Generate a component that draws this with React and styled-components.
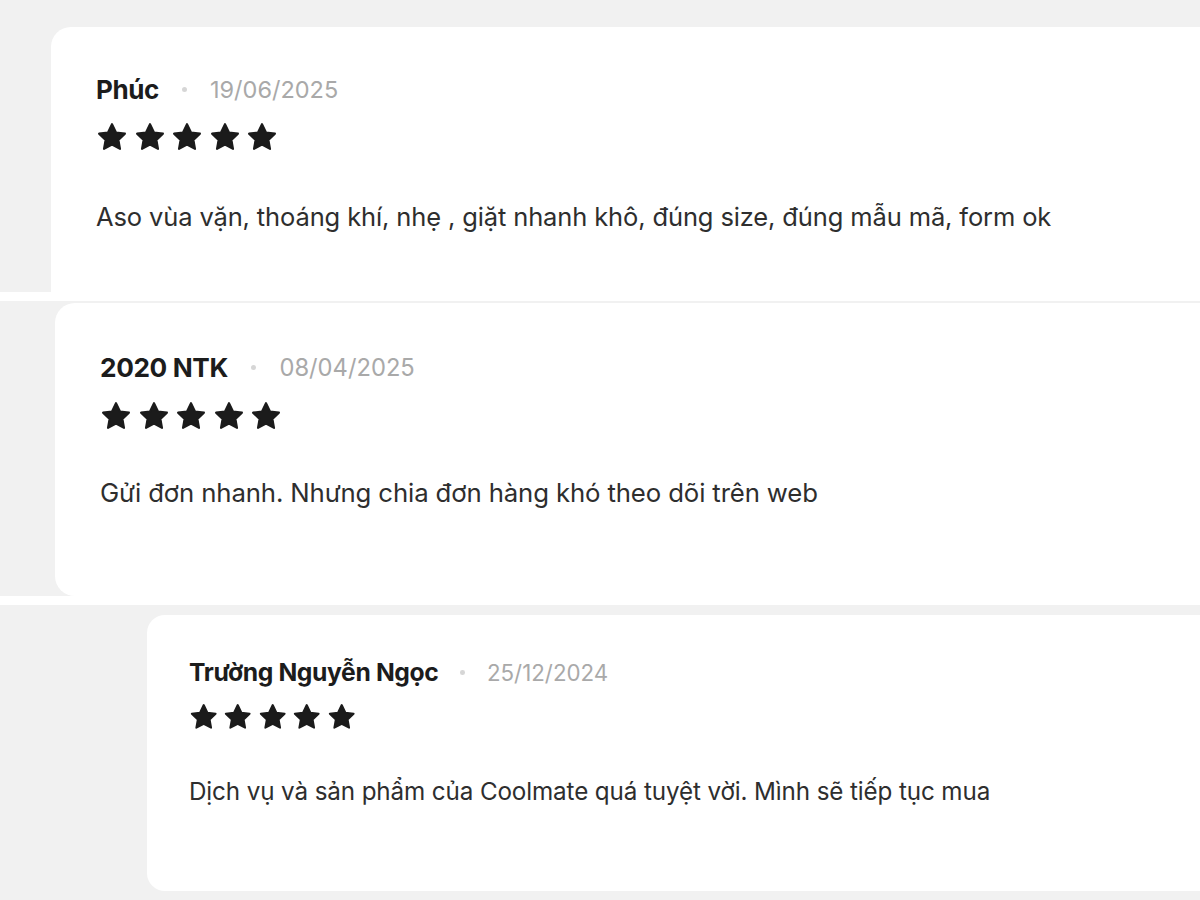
import styled, { createGlobalStyle } from 'styled-components'

const GlobalStyle = createGlobalStyle`
  html, body {
    margin: 0;
    padding: 0;
    background: #f1f1f1;
  }
  body {
    font-family: Inter, "Noto Sans", "Liberation Sans", sans-serif;
  }
`

const Page = styled.div`
  width: 1200px;
  height: 900px;
  overflow: hidden;
  display: flex;
  flex-direction: column;
  background: #f1f1f1;
`

const Section = styled.div`
  display: flex;
  padding: ${p => p.$pad};
  background: #f1f1f1;
`

const Strip = styled.div`
  height: ${p => p.$h}px;
  background: #fff;
`

const Card = styled.div`
  flex: 1;
  height: ${p => p.$h}px;
  background: #fff;
  border-radius: ${p => p.$radius};
  padding: ${p => p.$top}px 0 0 ${p => p.$left}px;
  box-sizing: border-box;
  display: flex;
  flex-direction: column;
`

const Head = styled.div`
  display: flex;
  align-items: center;
  gap: ${p => 23 * p.$s}px;
  height: ${p => 26 * p.$s}px;
`

const Name = styled.span`
  font-size: ${p => 26 * p.$s}px;
  font-weight: 700;
  color: #1c1c1c;
  letter-spacing: -0.015em;
`

const Dot = styled.span`
  width: ${p => 5 * p.$s}px;
  height: ${p => 5 * p.$s}px;
  border-radius: 50%;
  background: #d6d6d6;
`

const Date = styled.span`
  font-size: ${p => 23.5 * p.$s}px;
  color: #a9a9a9;
`

const Stars = styled.div`
  display: flex;
  gap: ${p => 5.5 * p.$s}px;
  margin-top: ${p => 20 * p.$s}px;
`

const Review = styled.p`
  margin: ${p => p.$gap}px 0 0;
  font-size: ${p => 25.5 * p.$s}px;
  color: #2e2e2e;
  letter-spacing: -0.005em;
`

function Star({ size }) {
  return (
    <svg width={size} height={size * 0.92} viewBox="0 0 24 22">
      <path
        d="M12 1.6l3 6.2 6.7.9-4.9 4.7 1.2 6.7L12 16.9l-6 3.2 1.2-6.7-4.9-4.7 6.7-.9z"
        fill="#1b1b1b"
        stroke="#1b1b1b"
        strokeWidth="1.6"
        strokeLinejoin="round"
      />
    </svg>
  )
}

function ReviewCard({ name, date, text, s, star, h, top, left, gap, radius }) {
  return (
    <Card $h={h} $top={top} $left={left} $radius={radius}>
      <Head $s={s}>
        <Name $s={s}>{name}</Name>
        <Dot $s={s} />
        <Date $s={s}>{date}</Date>
      </Head>
      <Stars $s={star}>
        {[0, 1, 2, 3, 4].map(i => <Star key={i} size={32 * star} />)}
      </Stars>
      <Review $s={s} $gap={gap}>{text}</Review>
    </Card>
  )
}

export default function App() {
  return (
    <Page>
      <GlobalStyle />
      <Section $pad="27px 0 0 51px">
        <ReviewCard
          name="Phúc"
          date="19/06/2025"
          text="Aso vùa vặn, thoáng khí, nhẹ , giặt nhanh khô, đúng size, đúng mẫu mã, form ok"
          s={1}
          star={1}
          h={265}
          top={49}
          left={45}
          gap={50}
          radius="20px 0 0 0"
        />
      </Section>
      <Strip $h={9} />
      <Section $pad="2px 0 0 55px">
        <ReviewCard
          name="2020 NTK"
          date="08/04/2025"
          text="Gửi đơn nhanh. Nhưng chia đơn hàng khó theo dõi trên web"
          s={1.01}
          star={1}
          h={293}
          top={52}
          left={45}
          gap={47}
          radius="20px 0 0 20px"
        />
      </Section>
      <Strip $h={10} />
      <Section $pad="10px 0 9px 147px">
        <ReviewCard
          name="Trường Nguyễn Ngọc"
          date="25/12/2024"
          text="Dịch vụ và sản phẩm của Coolmate quá tuyệt vời. Mình sẽ tiếp tục mua"
          s={0.95}
          star={0.92}
          h={276}
          top={45}
          left={42}
          gap={47}
          radius="18px 0 0 18px"
        />
      </Section>
    </Page>
  )
}
